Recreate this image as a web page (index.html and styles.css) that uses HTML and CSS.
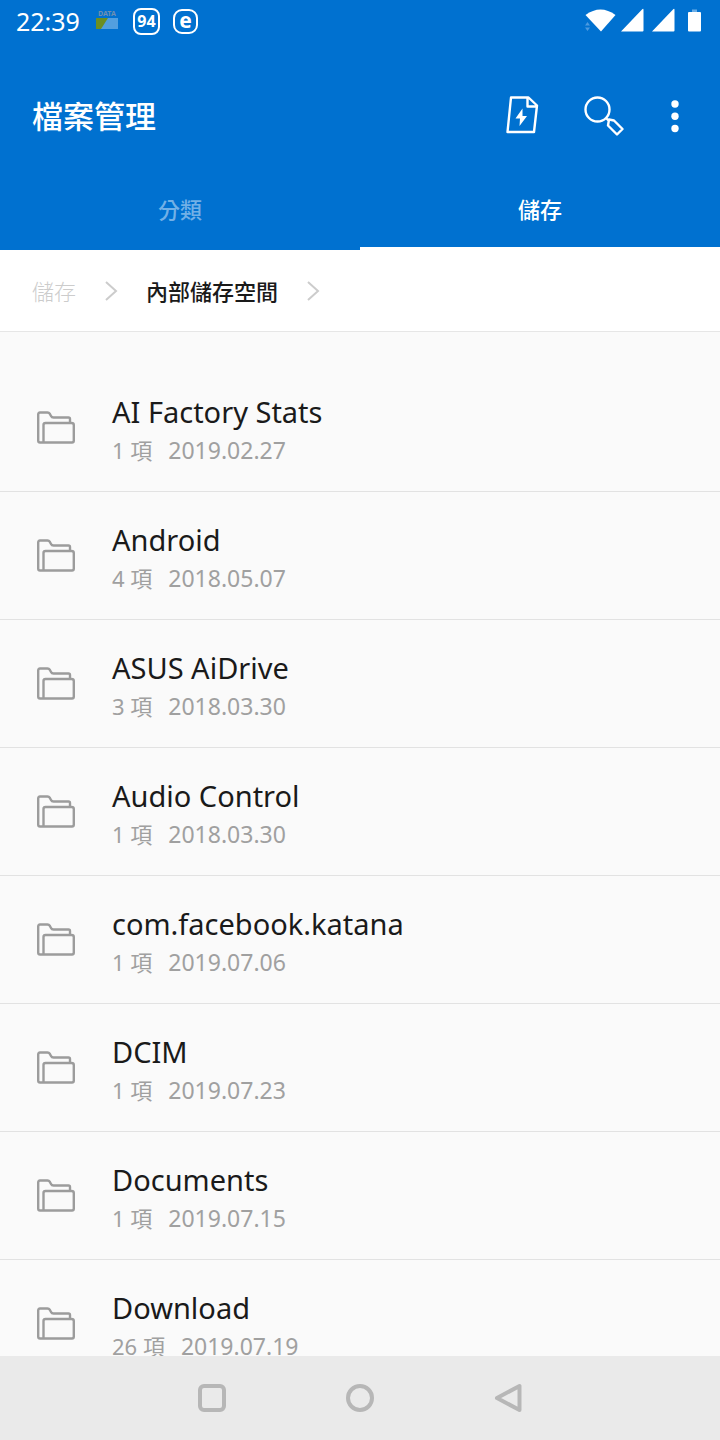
FILE: index.html
```html
<!DOCTYPE html>
<html lang="zh-Hant">
<head>
<meta charset="utf-8">
<meta name="viewport" content="width=device-width, initial-scale=1">
<title>檔案管理</title>
<link rel="stylesheet" href="styles.css">
</head>
<body>
<svg class="defs" aria-hidden="true">
  <symbol id="folder" viewBox="0 0 40 36">
    <path d="M7.500 32.500H4Q2.200 32.500 2.200 30.500V4.500Q2.200 2.500 4 2.500H11.500Q13 2.500 13.700 3.700L15 6Q15.700 7.500 17.500 7.500H32.500Q34 7.500 34 9V13M7.500 32.500V15Q7.500 13 9.500 13H35.500Q37.800 13 37.800 15V30.500Q37.800 32.500 36 32.500Z" fill="none" stroke="#9c9c9c" stroke-width="2.400" stroke-linejoin="round"/>
  </symbol>
</svg>
<header class="top">
  <div class="status">
    <time class="clock">22:39</time>
    <span class="data"><span class="data-label">DATA</span>
      <svg width="22" height="11" viewBox="0 0 22 11"><path d="M0 0H22V11H0Z" fill="#529fdf"/><path d="M0 0H12L5 11H0Z" fill="#6b8e23"/></svg>
    </span>
    <span class="badge speed">94</span>
    <span class="badge letter">e</span>
    <svg class="signals" width="120" height="26" viewBox="0 0 120 26" fill="#fff">
      <path d="M1.500 7Q16.500-4 31.500 7L17 23.500Z"/>
      <path d="M1 17.500L3.500 14L6 17.500ZM1 19.500H6L3.500 23Z" fill="#4b9ae0"/>
      <path d="M37 23.500L58 1.500Q59.500 0 59.500 2V22.500Q59.500 23.500 58.500 23.500ZM68 23.500L89 1.500Q90.500 0 90.500 2V22.500Q90.500 23.500 89.500 23.500Z"/>
      <path d="M108 1.500H113V4H108Z" fill="#6caee6"/><rect x="104" y="4" width="13" height="19.500" rx="1"/>
    </svg>
  </div>
  <div class="appbar">
    <h1 class="title">檔案管理</h1>
    <button class="action" type="button" aria-label="快速清理"><svg width="40" height="40" viewBox="0 0 40 40" fill="none" stroke="#fff" stroke-width="2.400" stroke-linejoin="round"><path d="M9 1.500H26.500L35 9.500L32 36H5.500ZM25.500 1.500V10.500H34.500"/><path d="M20.500 12.500L13.500 22.500H18L17.500 30L25 20H20.500Z" fill="#fff" stroke="none"/></svg></button>
    <button class="action search" type="button" aria-label="搜尋"><svg width="40" height="40" viewBox="0 0 40 40" fill="none" stroke="#fff" stroke-width="2.400" stroke-linejoin="round"><circle cx="13.500" cy="13.500" r="12"/><path d="M22 22L25 25M25 23.500L30 24.500L38.500 33L33 38.500L24 29.500Z"/></svg></button>
    <button class="action more" type="button" aria-label="更多"><svg width="10" height="36" viewBox="0 0 10 36" fill="#fff"><circle cx="5" cy="6" r="3.700"/><circle cx="5" cy="18.200" r="3.700"/><circle cx="5" cy="30.500" r="3.700"/></svg></button>
  </div>
  <div class="tabs" role="tablist">
    <button class="tab" type="button" role="tab" aria-selected="false">分類</button>
    <button class="tab active" type="button" role="tab" aria-selected="true">儲存</button>
  </div>
</header>
<nav class="crumbs" aria-label="路徑">
  <a class="crumb" href="#">儲存</a>
  <svg class="chevron" width="14" height="22" viewBox="0 0 14 22"><path d="M2 2L12 11L2 20"/></svg>
  <a class="crumb current" href="#">內部儲存空間</a>
  <svg class="chevron" width="14" height="22" viewBox="0 0 14 22"><path d="M2 2L12 11L2 20"/></svg>
</nav>
<main class="files">
  <a class="row" href="#"><svg class="folder"><use href="#folder"/></svg><span class="info"><span class="name">AI Factory Stats</span><span class="meta"><span>1 項</span><span class="date">2019.02.27</span></span></span></a>
  <a class="row" href="#"><svg class="folder"><use href="#folder"/></svg><span class="info"><span class="name">Android</span><span class="meta"><span>4 項</span><span class="date">2018.05.07</span></span></span></a>
  <a class="row" href="#"><svg class="folder"><use href="#folder"/></svg><span class="info"><span class="name">ASUS AiDrive</span><span class="meta"><span>3 項</span><span class="date">2018.03.30</span></span></span></a>
  <a class="row" href="#"><svg class="folder"><use href="#folder"/></svg><span class="info"><span class="name">Audio Control</span><span class="meta"><span>1 項</span><span class="date">2018.03.30</span></span></span></a>
  <a class="row" href="#"><svg class="folder"><use href="#folder"/></svg><span class="info"><span class="name">com.facebook.katana</span><span class="meta"><span>1 項</span><span class="date">2019.07.06</span></span></span></a>
  <a class="row" href="#"><svg class="folder"><use href="#folder"/></svg><span class="info"><span class="name">DCIM</span><span class="meta"><span>1 項</span><span class="date">2019.07.23</span></span></span></a>
  <a class="row" href="#"><svg class="folder"><use href="#folder"/></svg><span class="info"><span class="name">Documents</span><span class="meta"><span>1 項</span><span class="date">2019.07.15</span></span></span></a>
  <a class="row" href="#"><svg class="folder"><use href="#folder"/></svg><span class="info"><span class="name">Download</span><span class="meta"><span>26 項</span><span class="date">2019.07.19</span></span></span></a>
</main>
<footer class="system">
  <button class="key" type="button" aria-label="最近"><svg width="32" height="32" viewBox="0 0 32 32"><rect x="4" y="4" width="24" height="24" rx="4"/></svg></button>
  <button class="key" type="button" aria-label="主畫面"><svg width="32" height="32" viewBox="0 0 32 32"><circle cx="16" cy="16" r="12"/></svg></button>
  <button class="key" type="button" aria-label="返回"><svg width="32" height="32" viewBox="0 0 32 32"><path d="M5 16L27.500 4V28Z"/></svg></button>
</footer>
</body>
</html>
```
FILE: styles.css
```css
* { box-sizing: border-box; }
body {
  margin: 0;
  height: 100vh;
  display: flex;
  flex-direction: column;
  background: #fafafa;
  color: #1a1a1a;
  font-family: "Noto Sans", "Noto Sans CJK TC", sans-serif;
}
button {
  padding: 0;
  border: 0;
  background: none;
  color: inherit;
  font: inherit;
}
a { color: inherit; text-decoration: none; }
svg { display: block; flex: none; }
.defs { position: absolute; width: 0; height: 0; }

.top { flex: none; background: #0071d0; color: #fff; }
.status {
  display: flex;
  align-items: center;
  height: 42px;
  padding: 0 16px;
}
.clock { font-size: 25px; line-height: 32px; }
.data { margin-left: 16px; padding-bottom: 4px; }
.data-label {
  display: block;
  font-size: 7px;
  line-height: 8px;
  font-weight: 700;
  text-align: center;
  color: #6f8faf;
}
.badge {
  display: flex;
  align-items: center;
  justify-content: center;
  border: 2px solid #fff;
  font-weight: 700;
}
.speed { width: 27px; height: 27px; margin-left: 15px; border-radius: 8px; font-size: 16px; line-height: 16px; }
.letter { width: 25px; height: 25px; margin-left: 13px; border-radius: 9px; font-size: 21px; line-height: 16px; padding-bottom: 2px; }
.signals { margin-left: auto; }

.appbar {
  display: flex;
  align-items: center;
  height: 148px;
  padding: 0 32px;
}
.title { flex: 1; margin: 0; font-size: 31px; line-height: 40px; font-weight: 500; }
.action { display: flex; }
.search { margin-left: 42px; }
.more { margin-left: 46px; margin-right: 8px; }
.tabs { display: flex; height: 60px; }
.tab {
  flex: 1;
  padding-bottom: 20px;
  border-bottom: 3px solid transparent;
  font-size: 22px;
  line-height: 32px;
  font-weight: 500;
  color: #72b0e6;
}
.tab.active { color: #fff; border-color: #fff; }

.crumbs {
  flex: none;
  display: flex;
  align-items: center;
  height: 82px;
  padding: 0 32px;
  gap: 28px;
  background: #fff;
  border-bottom: 1px solid #e6e6e6;
  font-size: 22px;
  line-height: 32px;
}
.crumb { color: #ccc; font-weight: 300; }
.crumb.current { color: #1a1a1a; font-weight: 500; }
.chevron { fill: none; stroke: #ccc; stroke-width: 2; }

.files { flex: 1; min-height: 0; overflow-y: auto; scrollbar-width: none; padding-top: 32px; }
.row {
  display: flex;
  align-items: center;
  gap: 36px;
  height: 128px;
  padding: 0 36px;
  border-bottom: 1px solid #e2e2e2;
}
.folder { width: 40px; height: 36px; }
.info { display: flex; flex-direction: column; padding-top: 4px; }
.name { font-size: 29px; line-height: 40px; }
.meta { display: flex; gap: 16px; font-size: 22px; line-height: 36px; color: #a0a0a0; }
.date { font-size: 23px; }

.system {
  flex: none;
  display: flex;
  align-items: center;
  justify-content: center;
  gap: 116px;
  height: 84px;
  background: #eaeaea;
}
.key { display: flex; }
.key svg { fill: none; stroke: #b7b7b7; stroke-width: 4; stroke-linejoin: round; }
```
